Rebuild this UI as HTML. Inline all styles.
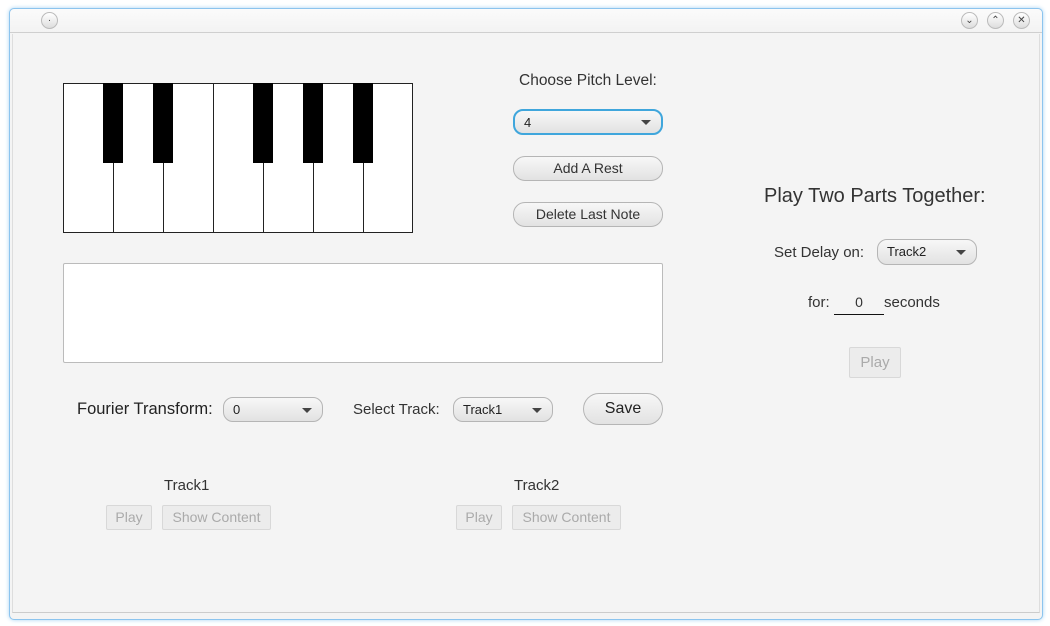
<!DOCTYPE html>
<html><head><meta charset="utf-8"><style>
*{box-sizing:border-box;margin:0;padding:0}
body{width:1050px;height:626px;background:#fff;font-family:"Liberation Sans",sans-serif;color:#333;position:relative;overflow:hidden}
.win{position:absolute;left:9px;top:8px;width:1034px;height:612px;border:1px solid #8cc4ee;border-radius:5px;background:#f4f4f4;box-shadow:0 0 4px #a8d4f4}
.title{position:absolute;left:0;top:0;width:100%;height:24px;background:linear-gradient(#fbfbfb,#f3f3f3);border-bottom:1px solid #cfcfcf;border-radius:5px 5px 0 0}
.inner{position:absolute;left:2px;top:25px;right:2px;bottom:6px;background:#f4f4f4;border-left:1px solid #ddd;border-right:1px solid #ddd;border-bottom:1px solid #ccc}
.wb{position:absolute;top:3px;width:17px;height:17px;border-radius:50%;border:1px solid #bbb;background:linear-gradient(#fff,#ddd);font-size:10px;line-height:15px;text-align:center;color:#444}
.a{position:absolute}
.lbl{position:absolute;font-size:15px;color:#333;white-space:nowrap}
.btn{position:absolute;border:1px solid #b5b5b5;border-radius:12px;background:linear-gradient(#f7f7f7,#e2e2e2);font-size:14px;text-align:center;color:#333}
.cmb{position:absolute;border:1px solid #b5b5b5;border-radius:10px;background:linear-gradient(#f7f7f7,#e2e2e2);font-size:13px;color:#222;padding-left:9px}
.cmb:after{content:"";position:absolute;right:10px;top:50%;margin-top:-2px;border-left:5px solid transparent;border-right:5px solid transparent;border-top:5px solid #444}
.dis{position:absolute;border:1px solid #d8d8d8;border-radius:2px;background:#ececec;color:#aaa;font-size:14px;text-align:center}
.wk{position:absolute;top:83px;width:51px;height:150px;border:1px solid #222;background:#fff}
.bk{position:absolute;top:83px;width:20px;height:80px;background:#000}
</style></head><body>
<div class="win">
 <div class="title">
  <div class="wb" style="left:31px">·</div>
  <div class="wb" style="left:951px">⌄</div>
  <div class="wb" style="left:977px">⌃</div>
  <div class="wb" style="left:1003px">✕</div>
 </div>
 <div class="inner"></div>
</div>
<div class="wk" style="left:63px"></div>
<div class="wk" style="left:113px"></div>
<div class="wk" style="left:163px"></div>
<div class="wk" style="left:213px"></div>
<div class="wk" style="left:263px"></div>
<div class="wk" style="left:313px"></div>
<div class="wk" style="left:363px;width:50px"></div>
<div class="bk" style="left:103px"></div>
<div class="bk" style="left:153px"></div>
<div class="bk" style="left:253px"></div>
<div class="bk" style="left:303px"></div>
<div class="bk" style="left:353px"></div>

<div class="lbl" style="left:519px;top:72px;font-size:15.5px">Choose Pitch Level:</div>
<div class="cmb" style="left:513px;top:109px;width:150px;height:26px;line-height:24px;border:2px solid #3fa6dc">4</div>
<div class="btn" style="left:513px;top:156px;width:150px;height:25px;line-height:23px">Add A Rest</div>
<div class="btn" style="left:513px;top:202px;width:150px;height:25px;line-height:23px">Delete Last Note</div>

<div class="a" style="left:63px;top:263px;width:600px;height:100px;background:#fff;border:1px solid #bbb;border-radius:2px"></div>

<div class="lbl" style="left:77px;top:400px;color:#222;font-size:16.5px">Fourier Transform:</div>
<div class="cmb" style="left:223px;top:397px;width:100px;height:25px;line-height:23px">0</div>
<div class="lbl" style="left:353px;top:401px">Select Track:</div>
<div class="cmb" style="left:453px;top:397px;width:100px;height:25px;line-height:23px">Track1</div>
<div class="btn" style="left:583px;top:393px;width:80px;height:32px;line-height:30px;font-size:16px;border-radius:16px;color:#222">Save</div>

<div class="lbl" style="left:164px;top:477px">Track1</div>
<div class="dis" style="left:106px;top:505px;width:46px;height:25px;line-height:23px">Play</div>
<div class="dis" style="left:162px;top:505px;width:109px;height:25px;line-height:23px">Show Content</div>
<div class="lbl" style="left:514px;top:477px">Track2</div>
<div class="dis" style="left:456px;top:505px;width:46px;height:25px;line-height:23px">Play</div>
<div class="dis" style="left:512px;top:505px;width:109px;height:25px;line-height:23px">Show Content</div>

<div class="lbl" style="left:764px;top:185px;font-size:20px">Play Two Parts Together:</div>
<div class="lbl" style="left:774px;top:244px">Set Delay on:</div>
<div class="cmb" style="left:877px;top:239px;width:100px;height:26px;line-height:24px">Track2</div>
<div class="lbl" style="left:808px;top:294px">for:</div>
<div class="a" style="left:834px;top:292px;width:50px;height:23px;border-bottom:1px solid #111;text-align:center;font-size:14px;line-height:20px">0</div>
<div class="lbl" style="left:884px;top:294px">seconds</div>
<div class="dis" style="left:849px;top:347px;width:52px;height:31px;line-height:29px;font-size:15px">Play</div>
</body></html>
